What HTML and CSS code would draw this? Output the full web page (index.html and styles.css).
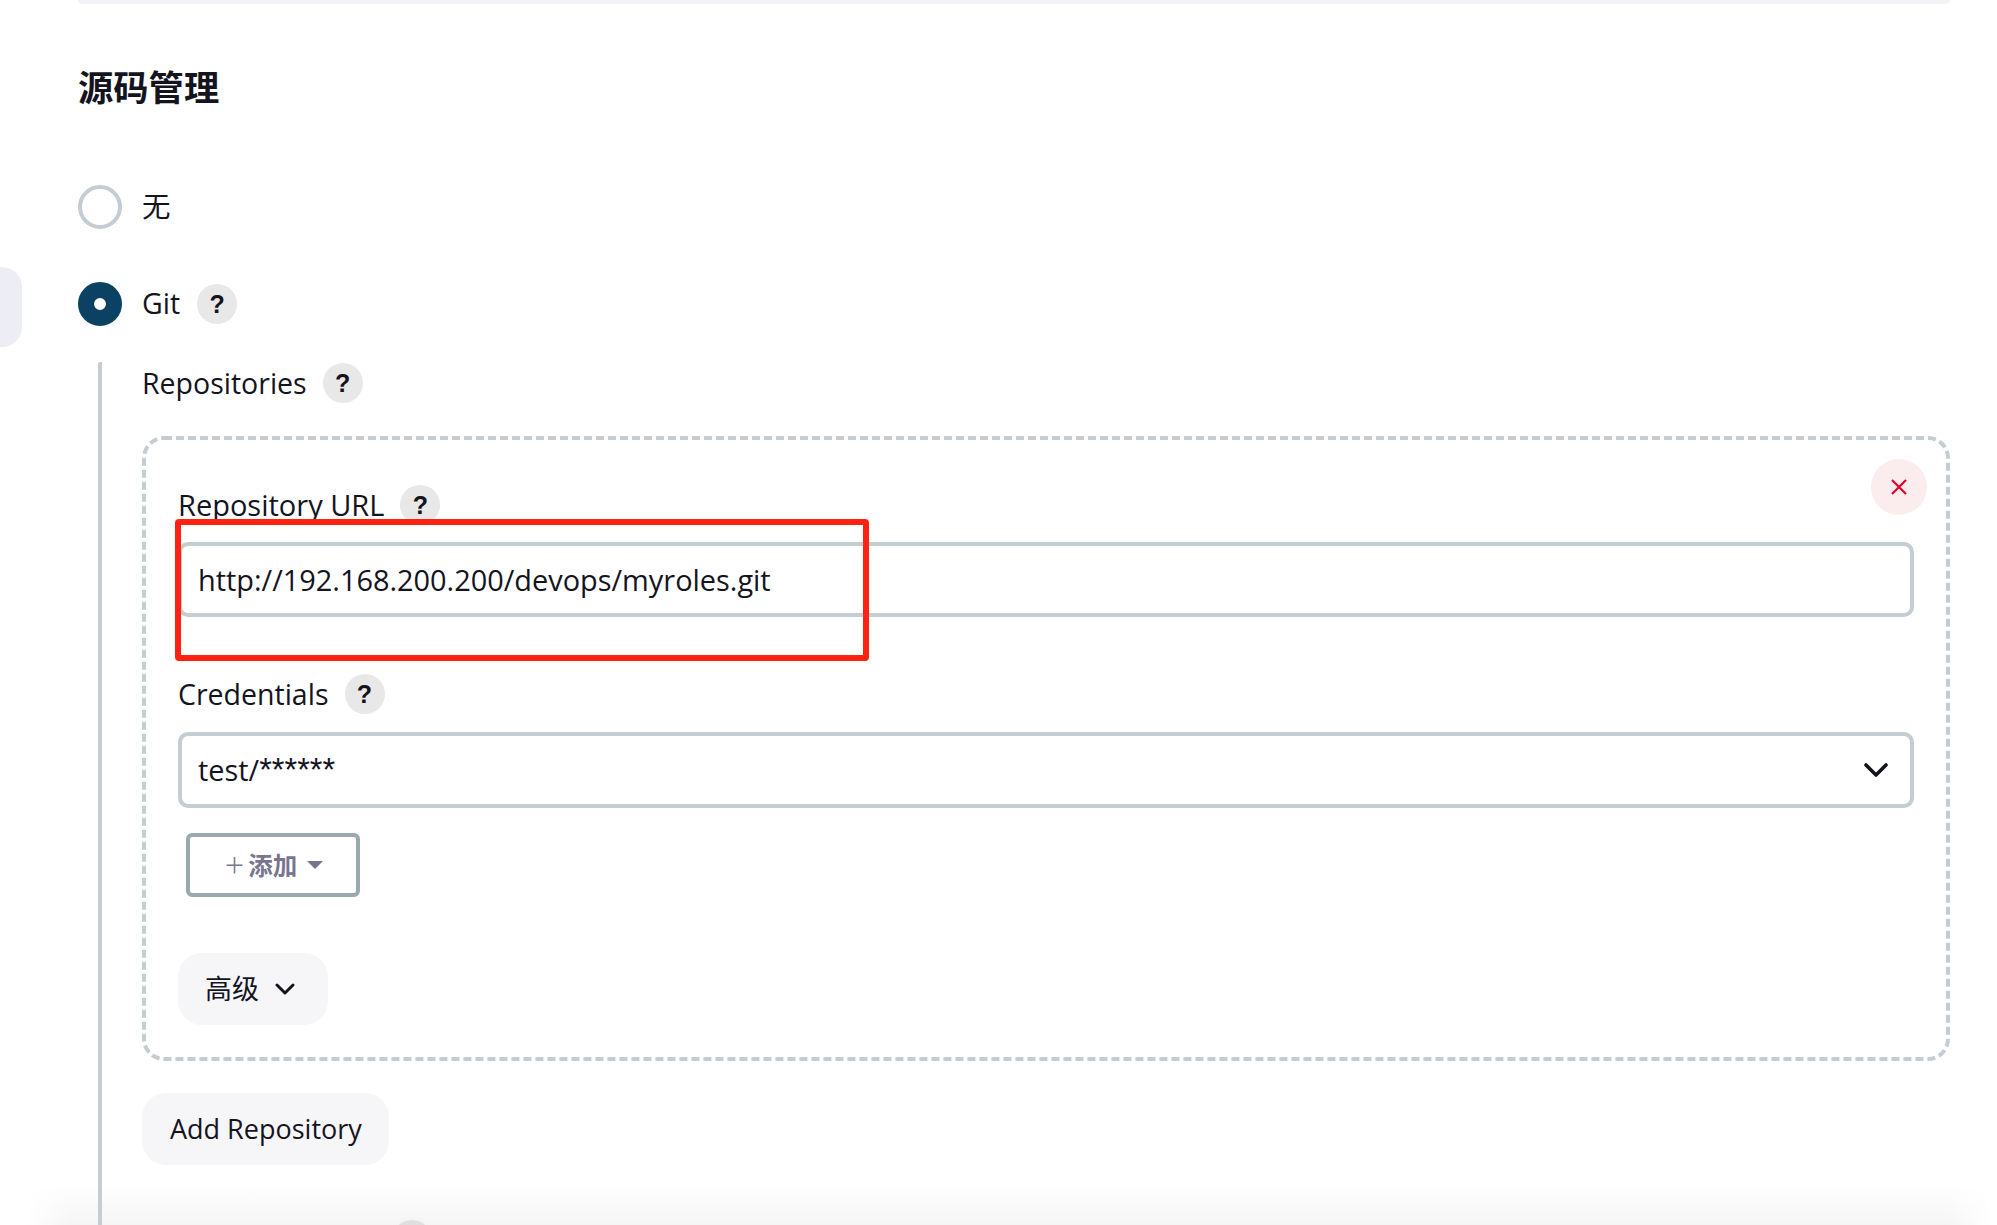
FILE: index.html
```html
<!DOCTYPE html>
<html lang="zh">
<head>
<meta charset="utf-8">
<title>源码管理</title>
<link rel="stylesheet" href="styles.css">
</head>
<body>
<div class="fade"></div>
<div class="side-tab"></div>
<main class="page">
  <div class="rule"></div>
  <h2 class="title">源码管理</h2>
  <div class="radio-row first"><span class="radio"></span><span class="radio-label">无</span></div>
  <div class="radio-row second"><span class="radio on"></span><span class="radio-label">Git</span><span class="help">?</span></div>
  <section class="nested">
    <div class="label-row"><span>Repositories</span><span class="help">?</span></div>
    <div class="card">
      <svg class="dashes" aria-hidden="true"><rect class="dash-rect" x="2" y="2" rx="20" ry="20"></rect></svg>
      <button class="del" type="button" aria-label="delete">
        <svg width="16" height="16" viewBox="0 0 16 16"><path d="M1 1 15 15M15 1 1 15"></path></svg>
      </button>
      <div class="label-row"><span class="wide">Repository URL</span><span class="help">?</span></div>
      <div class="field">http://192.168.200.200/devops/myroles.git</div>
      <div class="label-row cred"><span>Credentials</span><span class="help">?</span></div>
      <div class="field select"><span class="select-text">test/<span class="stars">******</span></span>
        <svg class="chev" width="24" height="15" viewBox="0 0 24 15"><path d="M2 2 12 12 22 2"></path></svg>
      </div>
      <button class="add" type="button"><span class="plus">+</span><span class="add-text">添加</span><span class="caret"></span></button>
      <button class="soft adv" type="button"><span>高级</span>
        <svg class="chev small" width="20" height="12" viewBox="0 0 20 12"><path d="M2 2 10 10 18 2"></path></svg>
      </button>
      <div class="mark"></div>
    </div>
    <button class="soft add-repo" type="button">Add Repository</button>
    <div class="next"><span class="stub"></span></div>
  </section>
</main>
</body>
</html>
```
FILE: styles.css
```css
html, body {
  margin: 0;
  height: 1225px;
  overflow: hidden;
  background: #fff;
}
body {
  position: relative;
  color: #14141f;
  font-family: "Open Sans", "Noto Sans CJK SC", sans-serif;
  font-size: 28.5px;
  line-height: 40px;
}
.side-tab {
  position: absolute;
  left: 0;
  top: 267px;
  width: 22px;
  height: 80px;
  background: #ecedf5;
  border-radius: 0 20px 20px 0;
}
.page {
  position: relative;
  padding: 0 47px 0 78px;
}
.rule {
  height: 4px;
  background: #f3f3f6;
  border-radius: 0 0 4px 4px;
}
.title {
  margin: 59px 0 0;
  font-family: "Noto Sans CJK SC", sans-serif;
  font-size: 35.3px;
  line-height: 46px;
  font-weight: 700;
}
.radio-row {
  display: flex;
  align-items: center;
  gap: 20px;
  height: 44px;
}
.radio-row.first { margin-top: 76px; }
.radio-row.second { margin-top: 53px; }
.radio-label { margin-bottom: 2px; }
.radio {
  box-sizing: border-box;
  width: 44px;
  height: 44px;
  border: 4px solid #c3cdd3;
  border-radius: 50%;
  background: #fff;
}
.radio.on {
  border: 16px solid #0b4263;
}
.help {
  display: flex;
  align-items: center;
  justify-content: center;
  width: 40px;
  height: 40px;
  border-radius: 50%;
  background: #e8e8e8;
  font-family: "Liberation Sans", sans-serif;
  font-size: 25px;
  font-weight: 700;
}
.radio-row .help { margin-left: -3px; }
.label-row {
  display: flex;
  align-items: center;
  gap: 16px;
  height: 40px;
}
.wide { font-size: 29px; }
.nested {
  margin: 36px 0 0 20px;
  padding: 1px 0 0 40px;
  border-left: 4px solid #c4cdd3;
  border-radius: 2px;
}
.card {
  position: relative;
  box-sizing: border-box;
  height: 625px;
  margin-top: 33px;
  padding: 49px 36px 36px;
}
.dashes {
  position: absolute;
  inset: 0;
  width: 100%;
  height: 100%;
}
.dash-rect {
  width: calc(100% - 4px);
  height: calc(100% - 4px);
  fill: none;
  stroke: #c4cdd3;
  stroke-width: 4;
  stroke-dasharray: 8 4;
}
.del {
  position: absolute;
  top: 23px;
  right: 23px;
  display: flex;
  align-items: center;
  justify-content: center;
  width: 56px;
  height: 56px;
  padding: 0;
  border: 0;
  border-radius: 50%;
  background: #fbecee;
}
.del path {
  fill: none;
  stroke: #e6002e;
  stroke-width: 2.2;
}
.field {
  box-sizing: border-box;
  display: flex;
  align-items: center;
  justify-content: space-between;
  height: 75px;
  margin-top: 17px;
  padding: 0 22px 0 16px;
  border: 4px solid #c3cdd2;
  border-radius: 10px;
  background: #fff;
  font-size: 28.9px;
}
.cred { margin-top: 57px; }
.select { height: 76px; margin-top: 18px; }
.select-text { margin-bottom: 1px; }
.stars {
  font-family: "Liberation Sans", sans-serif;
  font-size: 32.5px;
}
.chev path {
  fill: none;
  stroke: #14141f;
  stroke-width: 3.6;
  stroke-linejoin: round;
  stroke-linecap: round;
}
.chev.small path { stroke-width: 3; }
.add {
  box-sizing: border-box;
  display: flex;
  align-items: center;
  justify-content: center;
  width: 174px;
  height: 64px;
  margin: 25px 0 0 8px;
  padding: 0 0 0 2px;
  border: 4px solid #9aa8b0;
  border-radius: 6px;
  background: #fff;
  color: #78758f;
  font-family: "Noto Sans CJK SC", sans-serif;
  font-size: 24.5px;
  font-weight: 700;
}
.add-text { margin-bottom: 2px; }
.plus {
  margin-right: 4px;
  font-family: "Open Sans", sans-serif;
  font-weight: 300;
  font-size: 34px;
}
.caret {
  width: 0;
  height: 0;
  margin-left: 10px;
  border-left: 8.5px solid transparent;
  border-right: 8.5px solid transparent;
  border-top: 8px solid #78758f;
}
.soft {
  display: flex;
  align-items: center;
  height: 72px;
  padding: 0 27px 0 28px;
  border: 0;
  border-radius: 24px;
  background: #f6f6f9;
  color: inherit;
  font-family: inherit;
  font-size: 27px;
  line-height: 40px;
}
.adv {
  width: 150px;
  gap: 16px;
  margin-top: 56px;
  padding-left: 27px;
}
.add-repo {
  margin-top: 32px;
  width: 247px;
  white-space: nowrap;
}
.next {
  display: flex;
  margin-top: 55px;
  padding-left: 250px;
}
.stub {
  width: 40px;
  height: 40px;
  border-radius: 50%;
  background: #dfdfdf;
}
.mark {
  position: absolute;
  left: 33px;
  top: 83px;
  box-sizing: border-box;
  width: 694px;
  height: 142px;
  border: 6px solid #ff2211;
  border-radius: 4px;
}
.fade {
  position: absolute;
  left: 25px;
  right: 4px;
  bottom: 0;
  height: 42px;
  background: linear-gradient(rgba(245,245,245,0), #f5f5f5);
  -webkit-mask-image: linear-gradient(90deg, transparent, #000 45px, #000 calc(100% - 45px), transparent);
  mask-image: linear-gradient(90deg, transparent, #000 45px, #000 calc(100% - 45px), transparent);
}
```
